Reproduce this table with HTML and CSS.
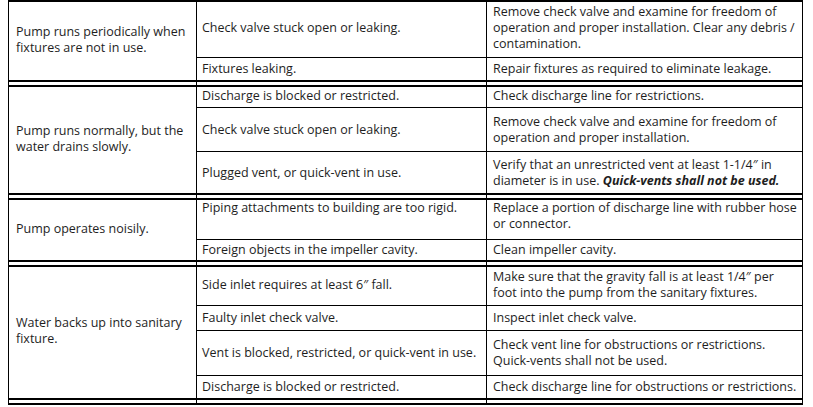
FILE: index.html
```html
<!DOCTYPE html>
<html>
<head>
<meta charset="utf-8">
<link rel="stylesheet" href="styles.css">
</head>
<body>
<div class="table">
  <div class="group g1">
    <div class="cell sym"><span>Pump runs periodically when fixtures are not in use.</span></div>
    <div class="cell cause"><span>Check valve stuck open or leaking.</span></div>
    <div class="cell fix"><span>Remove check valve and examine for freedom of operation and proper installation. Clear any debris / contamination.</span></div>
    <div class="cell cause rt"><span>Fixtures leaking.</span></div>
    <div class="cell fix rt"><span>Repair fixtures as required to eliminate leakage.</span></div>
  </div>
  <div class="sep"><div></div><div></div><div></div></div>
  <div class="group g2">
    <div class="cell sym"><span>Pump runs normally, but the water drains slowly.</span></div>
    <div class="cell cause"><span>Discharge is blocked or restricted.</span></div>
    <div class="cell fix"><span>Check discharge line for restrictions.</span></div>
    <div class="cell cause rt"><span>Check valve stuck open or leaking.</span></div>
    <div class="cell fix rt"><span>Remove check valve and examine for freedom of operation and proper installation.</span></div>
    <div class="cell cause rt"><span>Plugged vent, or quick-vent in use.</span></div>
    <div class="cell fix rt"><span>Verify that an unrestricted vent at least 1-1/4&Prime; in diameter is in use. <b><i>Quick-vents shall not be used.</i></b></span></div>
  </div>
  <div class="sep"><div></div><div></div><div></div></div>
  <div class="group g3">
    <div class="cell sym"><span>Pump operates noisily.</span></div>
    <div class="cell cause top"><span>Piping attachments to building are too rigid.</span></div>
    <div class="cell fix top"><span>Replace a portion of discharge line with rubber hose or connector.</span></div>
    <div class="cell cause rt"><span>Foreign objects in the impeller cavity.</span></div>
    <div class="cell fix rt"><span>Clean impeller cavity.</span></div>
  </div>
  <div class="sep"><div></div><div></div><div></div></div>
  <div class="group g4">
    <div class="cell sym"><span>Water backs up into sanitary fixture.</span></div>
    <div class="cell cause"><span>Side inlet requires at least 6&Prime; fall.</span></div>
    <div class="cell fix"><span>Make sure that the gravity fall is at least 1/4&Prime; per foot into the pump from the sanitary fixtures.</span></div>
    <div class="cell cause rt"><span>Faulty inlet check valve.</span></div>
    <div class="cell fix rt"><span>Inspect inlet check valve.</span></div>
    <div class="cell cause rt"><span>Vent is blocked, restricted, or quick-vent in use.</span></div>
    <div class="cell fix rt"><span>Check vent line for obstructions or restrictions. Quick-vents shall not be used.</span></div>
    <div class="cell cause rt"><span>Discharge is blocked or restricted.</span></div>
    <div class="cell fix rt"><span>Check discharge line for obstructions or restrictions.</span></div>
  </div>
  <div class="sep"><div></div><div></div><div></div></div>
</div>
</body>
</html>
```

FILE: styles.css
```css
html, body {
  margin: 0;
  padding: 0;
  background: #ffffff;
}

body {
  font-family: "Open Sans", "Noto Sans", sans-serif;
  font-size: 12.5px;
  line-height: 16px;
  color: #1e1e1e;
}

.table {
  margin-left: 8px;
  width: 793px;
  border-left: 1px solid #000;
  border-right: 1px solid #000;
  border-top: 2px solid #000;
}

.group {
  display: grid;
  grid-template-columns: 188px 290px 315px;
}

.g1 { grid-template-rows: 55px 23px; }
.g2 { grid-template-rows: 20px 44px 42px; }
.g3 { grid-template-rows: 39px 21px; }
.g4 { grid-template-rows: 38px 25px 45px 23px; }

.cell {
  display: flex;
  align-items: center;
  padding: 0 4px 3px 6px;
  box-sizing: border-box;
  overflow: hidden;
  hyphens: manual;
}

.cell span {
  display: block;
}

.sym {
  grid-column: 1;
  grid-row: 1 / -1;
  border-right: 1px solid #000;
  padding-left: 7px;
}

.cause {
  grid-column: 2;
  border-right: 1px solid #000;
  padding-left: 5px;
}

.fix {
  grid-column: 3;
}

.rt {
  border-top: 1px solid #000;
  padding-bottom: 0;
}

.top {
  align-items: flex-start;
  padding-top: 0;
}

.sep {
  display: grid;
  grid-template-columns: 188px 290px 315px;
  height: 3px;
  border-top: 2px solid #000;
  border-bottom: 2px solid #000;
}

.sep > div:nth-child(1),
.sep > div:nth-child(2) {
  border-right: 1px solid #000;
}
```
